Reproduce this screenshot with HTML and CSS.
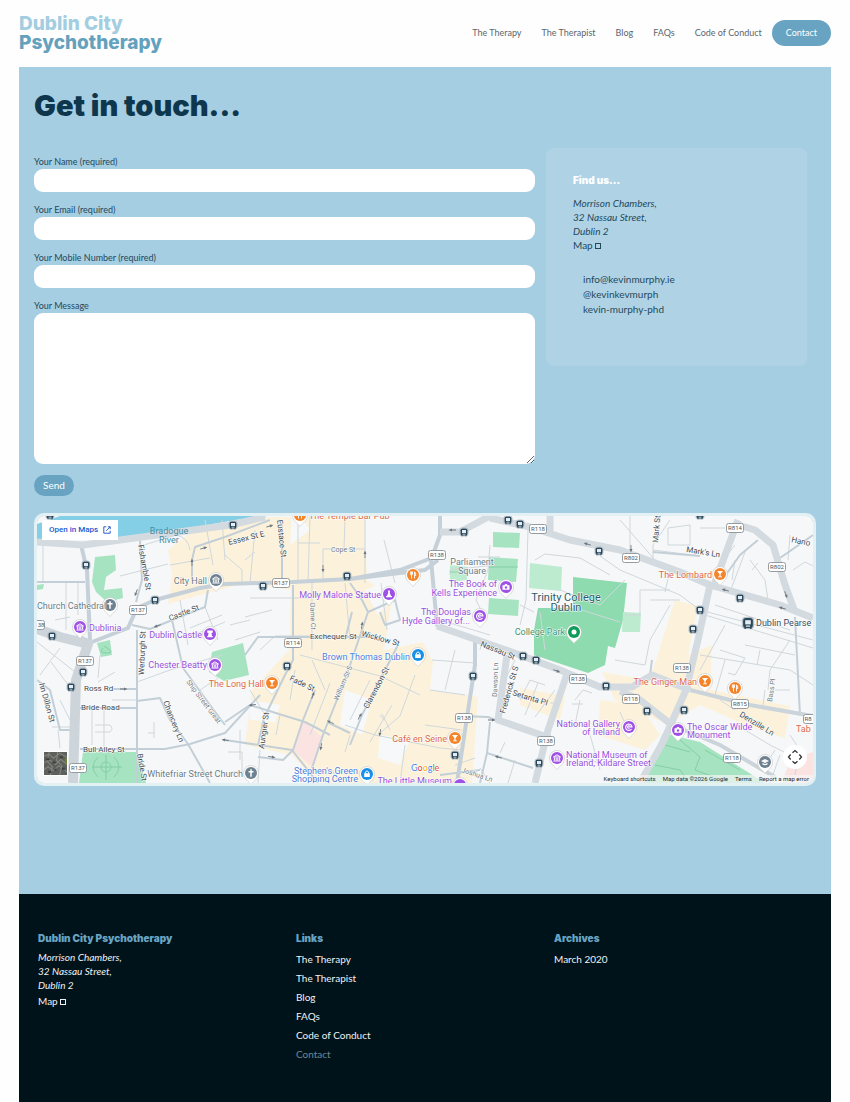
FILE: index.html
```html
<!DOCTYPE html>
<html lang="en">
<head>
<meta charset="utf-8">
<meta name="viewport" content="width=device-width, initial-scale=1">
<title>Contact – Dublin City Psychotherapy</title>
<link rel="stylesheet" href="styles.css">
</head>
<body>
<header class="site-header">
  <a class="logo" href="#"><span class="logo-top">Dublin City</span><span>Psychotherapy</span></a>
  <nav class="nav">
    <a href="#">The Therapy</a>
    <a href="#">The Therapist</a>
    <a href="#">Blog</a>
    <a href="#">FAQs</a>
    <a href="#">Code of Conduct</a>
    <a class="nav-cta" href="#">Contact</a>
  </nav>
</header>

<main class="main">
  <h1>Get in touch...</h1>
  <div class="columns">
    <form class="form">
      <div class="field"><label for="name">Your Name (required)</label><input id="name" type="text"></div>
      <div class="field"><label for="email">Your Email (required)</label><input id="email" type="email"></div>
      <div class="field"><label for="mobile">Your Mobile Number (required)</label><input id="mobile" type="tel"></div>
      <div class="field"><label for="message">Your Message</label><textarea id="message"></textarea></div>
      <button class="send" type="submit">Send</button>
    </form>
    <aside class="card">
      <h2>Find us...</h2>
      <address>Morrison Chambers,<br>32 Nassau Street,<br>Dublin 2</address>
      <a class="map-link" href="#">Map <span class="box"></span></a>
      <ul class="contacts">
        <li><a href="#">info@kevinmurphy.ie</a></li>
        <li><a href="#">@kevinkevmurph</a></li>
        <li><a href="#">kevin-murphy-phd</a></li>
      </ul>
    </aside>
  </div>

  <section class="map" aria-label="Map">
    <svg class="map-canvas" viewBox="37 516 776 267">
      <defs>
        <path id="pin" d="M0 11.500C-2 8.500-7.500 6-7.500 0A7.500 7.500 0 0 1 7.500 0C7.500 6 2 8.500 0 11.500Z" fill="#fff" stroke="#bbb" stroke-width=".5"/>
        <g id="museum" fill="none" stroke="#fff" stroke-width="1"><path d="M-3.500-1L0-3.200 3.500-1ZM-2.600-.5V2.500M2.600-.5V2.500M-.8 0V2.500M.8 0V2.500M-3.500 3H3.500"/></g>
        <path id="glass" d="M-3-3H3L.6 0V2.500H2V3.300H-2V2.500H-.6V0Z" fill="#fff"/>
        <path id="fork" d="M-2.600-3.500V-.8Q-2.600 0-1.500 0V3.500M-1.500-3.500V0M-.5-3.500V-.8Q-.5 0-1.500 0M1.500 3.500V-3.200Q3-2.500 2.800.5H1.500" fill="none" stroke="#fff" stroke-width=".9"/>
        <path id="cross" d="M0-3.800V3.800M-2.500-1.200H2.500" stroke="#fff" stroke-width="1.500"/>
        <path id="camera" d="M-3.500-1.800H-1.500L-1-3H1L1.500-1.800H3.500V2.800H-3.500Z" fill="#fff"/>
        <g id="bag"><path d="M-2.800-.8H2.800V3H-2.800Z" fill="#fff"/><path d="M-1.600-.8V-2Q0-4.200 1.600-2V-.8" fill="none" stroke="#fff"/></g>
        <path id="rook" d="M-2.800-3.500H2.800V-1.500L1.500-.8 2 2H2.800V3.300H-2.800V2H-2L-1.500-.8-2.800-1.500Z" fill="#fff"/>
        <g id="stop"><rect x="-4" y="-4" width="8" height="8" rx="2" fill="#fff" stroke="#9aaab5" stroke-width=".6"/><rect x="-3.500" y="-3.500" width="7" height="7" rx="1.800" fill="#294759"/><rect x="-2" y="-2" width="4" height="3" fill="#e4edf3"/><path d="M-1.500 2.200H1.500" stroke="#e4edf3" stroke-width=".8"/><path d="M-2 4.200V3M2 4.200V3" stroke="#294759"/></g>
        <g id="shield"><rect x="-8.500" y="-4.500" width="17" height="9" rx="2" fill="#fff" stroke="#959ca1" stroke-width="1"/></g>
        <path id="arrow" d="M-4-.4H0V-1.500L3.500 0 0 1.500V.4H-4Z" fill="#6c767e"/>
      </defs>

      <rect x="37" y="516" width="776" height="267" fill="#f6f7f8"/>

      <g fill="#fcf2db">
        <path d="M168 550L190 533 262 517H365L367 580 392 598 384 650 423 642 433 662 430 690 478 697 472 783H318L292 755 245 745 252 690 289 650 291 590 245 583 168 604 172 575Z"/>
        <path d="M520 688L565 696 560 720 520 705ZM602 672L655 681 712 690 790 706 785 738 750 727 700 705 668 725 615 700ZM675 600L698 606 688 655 712 645 710 690 650 679ZM600 700L640 705 660 735 645 750 598 735Z"/>
      </g>
      <g fill="#f7f8f9">
        <path d="M292 516H300L310 530 290 545ZM345 690L372 700 362 735 340 725ZM380 735L410 740 400 765 378 758ZM250 700L280 705 275 722 250 720ZM365 590L390 580 392 600 378 615Z"/>
      </g>
      <path fill="#fbe3e1" d="M303 720L322 737 313 768 293 750ZM790 760L813 752V783H782Z"/>
      <g fill="#a6e3c1">
        <path d="M95 557L115 555 116 570 106 577 104 590 122 588 123 598 107 602 96 592 92 582Z"/>
        <path d="M97 643L110 640 112 655 101 657ZM83 752H137L146 783H79ZM37 585L44 584 43 589 37 590Z"/>
        <path d="M212 652L243 643 249 675 224 681 209 672Z"/>
        <path d="M493 532L520 533 519 548 493 547ZM489 557L518 559 516 582 488 580ZM489 598L519 600 518 616 488 614Z"/>
        <path d="M663 733L700 742 765 783H642Z"/>
      </g>
      <path fill="#8ddbae" d="M573 577L627 583 623 620 615 648 608 646 605 665 588 673 534 655 534 630 538 608 573 608Z"/>
      <path fill="#bcebd0" d="M450 565L468 567 467 580 450 582ZM530 563L562 567 561 591 529 588ZM623 612L641 613 640 632 622 632Z"/>
      <path fill="#84cfe5" d="M37 524L60 516H268L235 520 180 530 120 538 37 541Z"/>

      <!-- lanes and footpaths -->
      <g fill="none" stroke="#cfd7dc" stroke-width="1">
        <path d="M43 545V582M66 582V630M78 582V615M55 620L70 617M37 642L75 672M40 675L60 648M51 662L72 690M60 700L70 720M52 727H76M60 748L58 730M92 708V745M104 708V747M95 725H110Q114 729 110 732H95M98 682L115 672M100 655L98 678M112 700H137M148 733H155M154 722V738M137 682L170 670 222 655"/>
        <path d="M144 545L176 535Q188 537 190 550M205 520L213 565M222 520L225 560M170 565L210 558M120 576L168 564M190 628L222 615M191 636L225 622M180 600L188 645M205 607L218 640M200 690L218 678M235 640L260 632M245 617L272 610M230 625L250 620"/>
        <path d="M255 530L250 583M298 520V583M310 516L308 583M323 549H365M323 549V583M365 518V583M298 543H320M345 520L344 548M312 583V650M250 598H310M245 560L255 552M225 555L242 570V585M384 540L395 583M381 583L387 630M300 655L380 676 420 695M295 670L290 700M345 583L350 640M312 660L325 690M260 650L275 636 310 636"/>
        <path d="M250 690L265 715M280 715L276 735M330 683L310 735M370 680L350 720M392 705L370 742M415 675L400 716 380 733M350 735L345 752M380 715L384 720M345 725L375 735 440 748 462 750M382 714L390 730M240 730V760M228 752H242V772H230M260 750L258 783M332 770L340 783M405 745L400 783"/>
        <path d="M455 650L445 690M432 660L475 663M430 690L465 695M425 725L462 730M480 650L482 640M490 545L488 570 476 600 482 612M478 557H500M528 530L526 600 520 625M520 605L534 612M535 560L545 554 580 558 610 575M540 612L545 650M575 608L620 622M560 590L600 605 625 580M440 620L490 635M495 565L450 570 450 575"/>
        <path d="M515 660L500 690M520 700L530 680 545 685M525 715L538 683M550 703H558M535 717L555 690M575 700L583 690 592 693M572 704H583M580 700L575 725M505 742L500 753M515 760L508 783M455 765L475 758M480 768L490 783"/>
        <path d="M630 516V550M653 563V545L670 520M653 550L700 556M668 528L690 525V545H668ZM700 528H725M620 520L655 560M600 556L620 570 680 595 700 610M640 590H670M640 590V615H625M650 600H680M670 570L665 592M735 560L732 580M745 552L730 592M715 570L735 545M750 560L765 580 768 600M758 563L752 570M790 535L788 560M793 570L805 562 813 566M700 610L813 640M705 615L813 648M715 605L790 630M745 645L795 655M700 670L725 625M720 650L745 658 735 675 728 673M760 650L757 665M790 640L770 670 768 690M700 655L790 670 813 685M775 690H790M765 690L763 705M720 700L735 710M745 730L770 745 790 755M775 750L762 770M780 755L770 783M790 735L800 750 795 775M615 660L645 665 650 640 670 605M628 730L620 712M590 735L600 770M575 755L605 765M725 660L715 695"/>
      </g>
      <g fill="none" stroke="#7cc9a0" stroke-width=".8">
        <path d="M106 755V780M92 767H122M98 757Q88 767 98 777M114 757Q124 767 114 777"/><circle cx="106" cy="767" r="5"/><path d="M103 648Q98 653 107 653T104 646M489 567H518M450 572H470M680 740L700 757 695 770 730 783M665 745L690 752M655 765L680 770 690 783M705 750L740 770"/>
      </g>

      <!-- streets -->
      <g fill="none" stroke="#c3cfd7" stroke-width="2" stroke-linejoin="round">
        <path d="M37 582H85M137 630V783M112 689H137M80 708H137M80 749H165L190 744 225 733 260 695M137 701L160 698 170 720 188 744 210 783M172 620L183 668 210 705 225 725M132 625L150 629 205 607 208 590M140 540L142 580 136 602M79 730H60L50 690 37 680"/>
        <path d="M282 520V583M293 585L293 660 285 675 264 718 258 745M192 580V560L195 547 225 537 270 520M257 637H380M258 637L245 655M293 585V637M225 740L292 750 318 783M225 722L250 705 305 722 330 735M315 690L303 720 293 750 283 760 258 757M323 735L312 768M322 737L345 680 368 612 362 600 350 583M368 612L395 600 400 620 385 625 380 612M345 640L352 612M398 645L362 715 350 745M327 722L350 733"/>
        <path d="M500 722L488 717 462 716M490 722L487 753 533 768M487 753L480 783M780 558L813 535M653 552L700 556M650 675L652 660M720 583L740 555 758 540M795 617L800 715M440 775L480 770"/>
      </g>
      <g fill="none" stroke="#c5d0d8" stroke-width="4" stroke-linejoin="round">
        <path d="M81 545L87 570 90 640M92 642L128 628 137 608 155 600 200 588 225 584 293 582 350 579 425 570 438 560M350 579L400 570 437 556M440 516V535L431 560 437 625 475 640V665L457 783"/>
      </g>
      <g fill="none" stroke="#d3dae0" stroke-width="7" stroke-linejoin="round">
        <path d="M37 542L83 545 120 540 230 525 265 517M440 532H460L490 516M490 518L530 527 570 540 620 550 680 572 710 585 780 605 813 618M437 626L480 641 520 655 560 670 600 687 632 687 652 675 690 690M620 691L640 700 672 725M567 674L548 730 535 783M507 655L498 720 550 738M710 585L698 640 686 690 663 742 640 783M714 585L738 520M735 524L755 530 773 545 785 585 795 612M550 516V535"/>
      </g>
      <path fill="none" stroke="#cbd4da" stroke-width="4" d="M690 690L750 705 813 716M672 725L720 745 775 777"/>
      <path fill="none" stroke="#cdd5db" stroke-width="10" stroke-linejoin="round" d="M37 629L60 637 88 644 76 680 73 783M75 638L92 646"/>

      <g>
        <use href="#arrow" x="124" y="689"/><use href="#arrow" transform="translate(157 626) rotate(160)"/><use href="#arrow" transform="translate(204 548) rotate(-18)"/><use href="#arrow" transform="translate(270 526) rotate(-18)"/><use href="#arrow" transform="translate(252 705) rotate(170)"/><use href="#arrow" x="492" y="720"/><use href="#arrow" transform="translate(498 757) rotate(197)"/><use href="#arrow" transform="translate(557 671) rotate(20)"/><use href="#arrow" transform="translate(587 544) rotate(195)"/><use href="#arrow" transform="translate(725 590) rotate(195)"/><use href="#arrow" transform="translate(782 608) rotate(195)"/><use href="#arrow" transform="translate(330 722) rotate(205)"/><use href="#arrow" transform="translate(452 530) rotate(180)"/><use href="#arrow" transform="translate(225 740) rotate(190)"/><use href="#arrow" transform="translate(272 757) rotate(10)"/>
        <use href="#arrow" transform="translate(323 569) rotate(90)"/><use href="#arrow" transform="translate(365 554) rotate(-90)"/><use href="#arrow" transform="translate(362 625) rotate(-80)"/><use href="#arrow" transform="translate(313 695) rotate(-70)"/><use href="#arrow" transform="translate(321 747) rotate(100)"/><use href="#arrow" transform="translate(360 716) rotate(-60)"/><use href="#arrow" transform="translate(380 733) rotate(100)"/><use href="#arrow" transform="translate(136 593) rotate(110)"/><use href="#arrow" transform="translate(192 562) rotate(-90)"/><use href="#arrow" transform="translate(631 549) rotate(90)"/><use href="#arrow" transform="translate(786 595) rotate(70)"/>
      </g>
      <g>
        <use href="#stop" x="50" y="515"/><use href="#stop" x="86" y="565"/><use href="#stop" x="155" y="600"/><use href="#stop" x="52" y="636"/><use href="#stop" x="83" y="672"/><use href="#stop" x="71" y="687"/><use href="#stop" x="233" y="525"/><use href="#stop" x="263" y="586"/><use href="#stop" x="347" y="576"/><use href="#stop" x="287" y="666"/><use href="#stop" x="464" y="532"/><use href="#stop" x="508" y="520"/><use href="#stop" x="520" y="524"/><use href="#stop" x="599" y="551"/><use href="#stop" x="523" y="656"/><use href="#stop" x="536" y="660"/><use href="#stop" x="473" y="676"/><use href="#stop" x="606" y="686"/><use href="#stop" x="455" y="755"/><use href="#stop" x="539" y="763"/><use href="#stop" x="700" y="515"/><use href="#stop" x="740" y="598"/><use href="#stop" x="700" y="610"/><use href="#stop" x="693" y="629"/><use href="#stop" x="647" y="711"/><use href="#stop" x="684" y="710"/><use href="#stop" transform="translate(748 623) scale(1.400)"/>
      </g>

      <g class="shields">
        <use href="#shield" x="138" y="610"/><text x="138" y="612">R137</text>
        <use href="#shield" x="36" y="625"/><text x="41" y="627">38</text>
        <use href="#shield" x="85" y="661"/><text x="85" y="663">R137</text>
        <use href="#shield" x="78" y="768"/><text x="78" y="770">R137</text>
        <use href="#shield" x="281" y="583"/><text x="281" y="585">R137</text>
        <use href="#shield" x="293" y="643"/><text x="293" y="645">R114</text>
        <use href="#shield" x="437" y="555"/><text x="437" y="557">R138</text>
        <use href="#shield" x="538" y="529"/><text x="538" y="531">R118</text>
        <use href="#shield" x="578" y="679"/><text x="578" y="681">R138</text>
        <use href="#shield" x="464" y="718"/><text x="464" y="720">R138</text>
        <use href="#shield" x="546" y="741"/><text x="546" y="743">R138</text>
        <use href="#shield" x="631" y="558"/><text x="631" y="560">R802</text>
        <use href="#shield" x="735" y="528"/><text x="735" y="530">R814</text>
        <use href="#shield" x="777" y="567"/><text x="777" y="569">R802</text>
        <use href="#shield" x="682" y="668"/><text x="682" y="670">R138</text>
        <use href="#shield" x="631" y="699"/><text x="631" y="701">R118</text>
        <use href="#shield" x="740" y="704"/><text x="740" y="706">R815</text>
        <use href="#shield" x="812" y="719"/><text x="808" y="721">R8</text>
        <use href="#shield" x="732" y="758"/><text x="732" y="760">R118</text>
      </g>

      <g class="pins">
        <g fill="#6d8190">
          <g transform="translate(110 605)"><use href="#pin"/><circle r="6"/><use href="#cross"/></g>
          <g transform="translate(216 580)"><use href="#pin"/><circle r="6"/><use href="#museum"/></g>
          <g transform="translate(251 773)"><use href="#pin"/><circle r="6"/><use href="#cross"/></g>
          <g transform="translate(765 762)"><use href="#pin"/><circle r="6"/><path d="M-4-1L0-3 4-1 0 1ZM-2.500 1V2.500Q0 4 2.500 2.500V1L0 2Z" fill="#fff"/></g>
        </g>
        <g fill="#9f50e6">
          <g transform="translate(80 627)"><use href="#pin"/><circle r="6"/><use href="#museum"/></g>
          <g transform="translate(210 634)"><use href="#pin"/><circle r="6"/><use href="#rook"/></g>
          <g transform="translate(215 665)"><use href="#pin"/><circle r="6"/><use href="#museum"/></g>
          <g transform="translate(389 594)"><use href="#pin"/><circle r="6"/><path d="M-1-3.500H1L.8-1 2 2H3V3.300H-3V2H-2L-.8-1Z" fill="#fff"/></g>
          <g transform="translate(506 587)"><use href="#pin"/><circle r="6"/><use href="#camera"/><circle cy=".5" r="1.200"/></g>
          <g transform="translate(480 616)"><use href="#pin"/><circle r="6"/><path d="M2.500 2A3.200 3.200 0 1 1 3 0H1A1.200 1.200 0 1 0 .5 1" fill="none" stroke="#fff" stroke-width="1.200"/></g>
          <g transform="translate(629 727)"><use href="#pin"/><circle r="6"/><path d="M2.500 2A3.200 3.200 0 1 1 3 0H1A1.200 1.200 0 1 0 .5 1" fill="none" stroke="#fff" stroke-width="1.200"/></g>
          <g transform="translate(557 758)"><use href="#pin"/><circle r="6"/><use href="#museum"/></g>
          <g transform="translate(678 730)"><use href="#pin"/><circle r="6"/><use href="#camera"/><circle cy=".5" r="1.200"/></g>
          <g transform="translate(460 785)"><use href="#pin"/><circle r="6"/></g>
        </g>
        <g fill="#f5852b">
          <g transform="translate(300 515)"><use href="#pin"/><circle r="6"/><use href="#fork"/></g>
          <g transform="translate(413 575)"><use href="#pin"/><circle r="6"/><use href="#fork"/></g>
          <g transform="translate(272 683)"><use href="#pin"/><circle r="6"/><use href="#glass"/></g>
          <g transform="translate(455 738)"><use href="#pin"/><circle r="6"/><use href="#glass"/></g>
          <g transform="translate(720 574)"><use href="#pin"/><circle r="6"/><use href="#glass"/></g>
          <g transform="translate(705 681)"><use href="#pin"/><circle r="6"/><use href="#glass"/></g>
          <g transform="translate(735 688)"><use href="#pin"/><circle r="6"/><use href="#fork"/></g>
        </g>
        <g fill="#1a8fe8">
          <g transform="translate(418 655)"><use href="#pin"/><circle r="6"/><use href="#bag"/></g>
          <g transform="translate(367 774)"><use href="#pin"/><circle r="6"/><use href="#bag"/></g>
        </g>
        <g transform="translate(574 632)" fill="#119b5b"><use href="#pin"/><circle r="6"/><circle r="2.500" fill="#fff"/></g>
      </g>

      <g class="streets">
        <text transform="translate(138 545) rotate(80)">Fishamble St</text>
        <text transform="translate(170 621) rotate(-21)">Castle St</text>
        <text transform="translate(144 675) rotate(-88)">Werburgh St</text>
        <text x="84" y="691">Ross Rd</text>
        <text x="81" y="710">Bride Road</text>
        <text x="83" y="752">Bull Alley St</text>
        <text transform="translate(39 684) rotate(74)">hn Dillon St</text>
        <text transform="translate(163 702) rotate(68)">Chancery Ln</text>
        <text transform="translate(186 682) rotate(53)" class="lane">Ship Street Great</text>
        <text transform="translate(137 754) rotate(80)">Bride St</text>
        <text transform="translate(229 545) rotate(-14)">Essex St E</text>
        <text transform="translate(277 520) rotate(84)">Eustace St</text>
        <text x="331" y="552" class="lane">Cope St</text>
        <text transform="translate(310 603) rotate(88)" class="lane">Dame Ct</text>
        <text x="310" y="639">Exchequer St</text>
        <text transform="translate(361 636) rotate(15)">Wicklow St</text>
        <text transform="translate(289 680) rotate(26)">Fade St</text>
        <text transform="translate(338 701) rotate(-67)" class="lane">William St S</text>
        <text transform="translate(368 709) rotate(-62)">Clarendon St</text>
        <text transform="translate(264 749) rotate(-82)">Aungier St</text>
        <text transform="translate(480 646) rotate(22)">Nassau St</text>
        <text transform="translate(497 697) rotate(-88)" class="lane">Dawson Ln</text>
        <text transform="translate(505 714) rotate(-74)">Frederick St S</text>
        <text transform="translate(512 695) rotate(17)">Setanta Pl</text>
        <text transform="translate(461 772) rotate(18)" class="lane">Joshua Ln</text>
        <text transform="translate(658 543) rotate(-85)">Mark St</text>
        <text transform="translate(686 552) rotate(9)">Mark's Ln</text>
        <text transform="translate(791 542) rotate(12)">Hano</text>
        <text transform="translate(772 702) rotate(-82)" class="lane">Bass Pl</text>
        <text transform="translate(739 716) rotate(31)">Denzille Ln</text>
      </g>
      <g class="places">
        <text x="169" y="534" class="water mid">Bradogue</text><text x="169" y="543" class="water mid">River</text>
        <g class="civic">
          <text x="37" y="609">Church Cathedral</text>
          <text x="207" y="584" class="end">City Hall</text>
          <text x="243" y="777" class="end">Whitefriar Street Church</text>
          <text x="472" y="565" class="mid">Parliament</text><text x="472" y="574" class="mid">Square</text>
        </g>
        <g class="sight">
          <text x="89" y="631">Dublinia</text>
          <text x="202" y="638" class="end">Dublin Castle</text>
          <text x="207" y="668" class="end">Chester Beatty</text>
          <text x="381" y="598" class="end">Molly Malone Statue</text>
          <text x="497" y="587" class="end">The Book of</text><text x="497" y="596" class="end">Kells Experience</text>
          <text x="471" y="615" class="end">The Douglas</text><text x="470" y="624" class="end">Hyde Gallery of...</text>
          <text x="620" y="727" class="end">National Gallery</text><text x="620" y="735" class="end">of Ireland</text>
          <text x="566" y="758">National Museum of</text><text x="566" y="766">Ireland, Kildare Street</text>
          <text x="687" y="730">The Oscar Wilde</text><text x="687" y="738">Monument</text>
          <text x="452" y="784" class="end">The Little Museum</text>
        </g>
        <g class="food">
          <text x="309" y="519">The Temple Bar Pub</text>
          <text x="264" y="687" class="end">The Long Hall</text>
          <text x="447" y="742" class="end">Café en Seine</text>
          <text x="712" y="578" class="end">The Lombard</text>
          <text x="697" y="685" class="end">The Ginger Man</text>
          <text x="796" y="732">Tab</text>
        </g>
        <g class="shop">
          <text x="410" y="660" class="end">Brown Thomas Dublin</text>
          <text x="358" y="774" class="end">Stephen's Green</text><text x="358" y="782" class="end">Shopping Centre</text>
        </g>
        <text x="566" y="601" class="campus mid">Trinity College</text><text x="566" y="611" class="campus mid">Dublin</text>
        <text x="565" y="635" class="park end">College Park</text>
        <text x="756" y="626" class="station">Dublin Pearse</text>
      </g>
      <text x="411" y="771" class="brand"><tspan fill="#4285f4">G</tspan><tspan fill="#ea4335">o</tspan><tspan fill="#f2b400">o</tspan><tspan fill="#4285f4">g</tspan><tspan fill="#34a853">l</tspan><tspan fill="#ea4335">e</tspan></text>
    </svg>
    <a class="open-maps" href="#">Open in Maps
      <svg viewBox="0 0 10 10" width="8" height="8" fill="none" stroke="currentColor" stroke-width="1.200"><path d="M4 1H1V9H9V6M6 1H9V4M9 1L4 6"/></svg>
    </a>
    <button class="satellite" type="button" aria-label="Show satellite imagery">
      <svg viewBox="0 0 22 22"><rect width="22" height="22" fill="#5d605d"/><path d="M0 4L5 2 9 6 15 1 22 5M0 10L6 8 11 12 16 7 22 12M0 17L4 14 9 18 14 13 22 19M5 0L3 9 8 14 6 22M13 0L12 8 17 13 15 22" fill="none" stroke="#85877f"/><path d="M2 6H5V8H2ZM8 9H11V11H8ZM15 4H18V6H15ZM4 18H7V20H4ZM17 15H20V17H17ZM10 16H12V18H10Z" fill="#3b403e"/><path d="M20 6H22V12H20Z" fill="#70803b"/></svg>
    </button>
    <button class="camera" type="button" aria-label="Map camera controls">
      <svg viewBox="0 0 16 16" width="16" height="16" fill="none" stroke="#333" stroke-width="1.300"><path d="M5.500 3.700L8 1.500 10.500 3.700M5.500 12.300L8 14.500 10.500 12.300M3.700 5.500L1.500 8 3.700 10.500M12.300 5.500L14.500 8 12.300 10.500"/></svg>
    </button>
    <div class="credits">
      <button type="button">Keyboard shortcuts</button><span>Map data ©2026 Google</span><a href="#">Terms</a><a href="#">Report a map error</a>
    </div>
  </section>
</main>

<footer class="footer">
  <section>
    <h2>Dublin City Psychotherapy</h2>
    <address>Morrison Chambers,<br>32 Nassau Street,<br>Dublin 2</address>
    <a class="map-link" href="#">Map <span class="box"></span></a>
  </section>
  <section>
    <h2>Links</h2>
    <ul>
      <li><a href="#">The Therapy</a></li>
      <li><a href="#">The Therapist</a></li>
      <li><a href="#">Blog</a></li>
      <li><a href="#">FAQs</a></li>
      <li><a href="#">Code of Conduct</a></li>
      <li><a class="current" href="#">Contact</a></li>
    </ul>
  </section>
  <section>
    <h2>Archives</h2>
    <ul><li><a href="#">March 2020</a></li></ul>
  </section>
</footer>
</body>
</html>
```
FILE: styles.css
```css
* { box-sizing: border-box; }

body {
  display: flex;
  flex-direction: column;
  min-height: 100vh;
  margin: 0;
  padding: 0 19px;
  background: #fefefe;
  color: #24485b;
  font: 10px/14px Lato, "Open Sans", sans-serif;
}

a { color: inherit; text-decoration: none; }
h1, h2, ul { margin: 0; padding: 0; }
ul { list-style: none; }
h1, h2, .logo { font-family: Inter, "Open Sans", sans-serif; font-weight: 900; }
button, input, textarea { font: inherit; border: 0; }

.site-header {
  display: flex;
  align-items: center;
  justify-content: space-between;
  min-height: 67px;
  padding-bottom: 2px;
}
.logo {
  display: flex;
  flex-direction: column;
  color: #64a1bd;
  font-size: 19px;
  font-weight: 800;
  line-height: 19px;
}
.logo-top { color: #a3cde0; }
.nav {
  display: flex;
  align-items: center;
  gap: 20px;
  color: #5c666d;
  font-size: 9px;
}
.nav-cta {
  margin-left: -10px;
  padding: 6px 14px;
  border-radius: 13px;
  background: #68a4c1;
  color: #fff;
}

.main {
  padding: 22px 15px 108px;
  background: #a6cee2;
}
h1 {
  color: #0e364d;
  font-size: 29px;
  line-height: 34px;
}
.columns {
  display: grid;
  grid-template-columns: 501fr 261fr;
  gap: 11px;
  align-items: start;
  margin-bottom: 17px;
  padding: 25px 9px 0 0;
}
.form { padding-top: 7px; }
.field {
  display: flex;
  flex-direction: column;
  margin-bottom: 11px;
}
.field label { font-size: 9px; }
.field input {
  height: 23px;
  padding: 0 8px;
  border-radius: 9px;
  background: #fff;
}
.field textarea {
  height: 151px;
  padding: 8px;
  border-radius: 9px;
  background: #fff;
}
.send {
  display: block;
  padding: 3px 9px 4px;
  border-radius: 11px;
  background: #68a4c1;
  color: #fff;
}

.card {
  min-height: 218px;
  padding: 25px 27px;
  border-radius: 8px;
  background: #afd3e5;
}
.card h2 {
  margin-bottom: 9px;
  color: #fff;
  font-size: 10px;
}
address, .map-link { display: block; }
.box {
  display: inline-block;
  width: 6px;
  height: 6px;
  border: 1px solid;
}
.contacts {
  padding: 20px 10px 0;
  line-height: 15px;
}

.map {
  position: relative;
  overflow: hidden;
  border: 3px solid #e3f0f4;
  border-radius: 10px;
  font-family: Roboto, sans-serif;
}
.map-canvas { display: block; width: 100%; height: auto; }
.map-canvas text {
  fill: #59646c;
  font: 8px Roboto, sans-serif;
  paint-order: stroke;
  stroke: #fff;
  stroke-width: 1px;
}
.map-canvas .streets text { fill: #414a50; }
.map-canvas .streets .lane { fill: #717b82; font-size: 7px; }
.map-canvas .shields text { fill: #4f585e; font-size: 6px; stroke: none; text-anchor: middle; }
.map-canvas .mid { text-anchor: middle; }
.map-canvas .end { text-anchor: end; }
.map-canvas .places text { font-size: 9px; }
.map-canvas .places .water { fill: #458fa3; stroke: none; }
.map-canvas .civic text { fill: #6a7b86; }
.map-canvas .sight text { fill: #974fdc; }
.map-canvas .food text { fill: #db694a; }
.map-canvas .shop text { fill: #4d7ddb; }
.map-canvas .places .campus { fill: #285b68; font-size: 11px; }
.map-canvas .places .park { fill: #3b936b; }
.map-canvas .places .station { fill: #384c5c; }
.map-canvas .brand { font: 9px Lato, sans-serif; }

.open-maps {
  position: absolute;
  top: 4px;
  left: 5px;
  display: flex;
  align-items: center;
  gap: 5px;
  padding: 3px 7px;
  background: #fff;
  color: #2359cf;
  font-size: 8px;
  font-weight: 500;
}
.satellite {
  position: absolute;
  bottom: 7px;
  left: 6px;
  width: 25px;
  height: 25px;
  padding: 0;
  border: 1px solid #fff;
}
.satellite svg { display: block; width: 100%; height: 100%; }
.camera {
  position: absolute;
  right: 6px;
  bottom: 14px;
  display: grid;
  place-items: center;
  width: 24px;
  height: 24px;
  padding: 0;
  border-radius: 50%;
  background: #fff;
}
.credits {
  position: absolute;
  right: 0;
  bottom: 0;
  display: flex;
  gap: 7px;
  padding: 0 4px;
  background: rgb(245 245 245 / 70%);
  color: #26292b;
  font-size: 6px;
  line-height: 8px;
}
.credits button { padding: 0; background: none; color: inherit; }

.footer {
  display: grid;
  flex: 1;
  grid-template-columns: repeat(3, 1fr);
  padding: 37px 19px 34px;
  background: #00131b;
  color: #f0f2f3;
}
.footer h2 {
  margin-bottom: 5px;
  color: #68a4c4;
  font-size: 10px;
}
.footer .map-link { padding-top: 2px; }
.footer li { line-height: 19px; }
.footer .current { color: #68899a; }
```
